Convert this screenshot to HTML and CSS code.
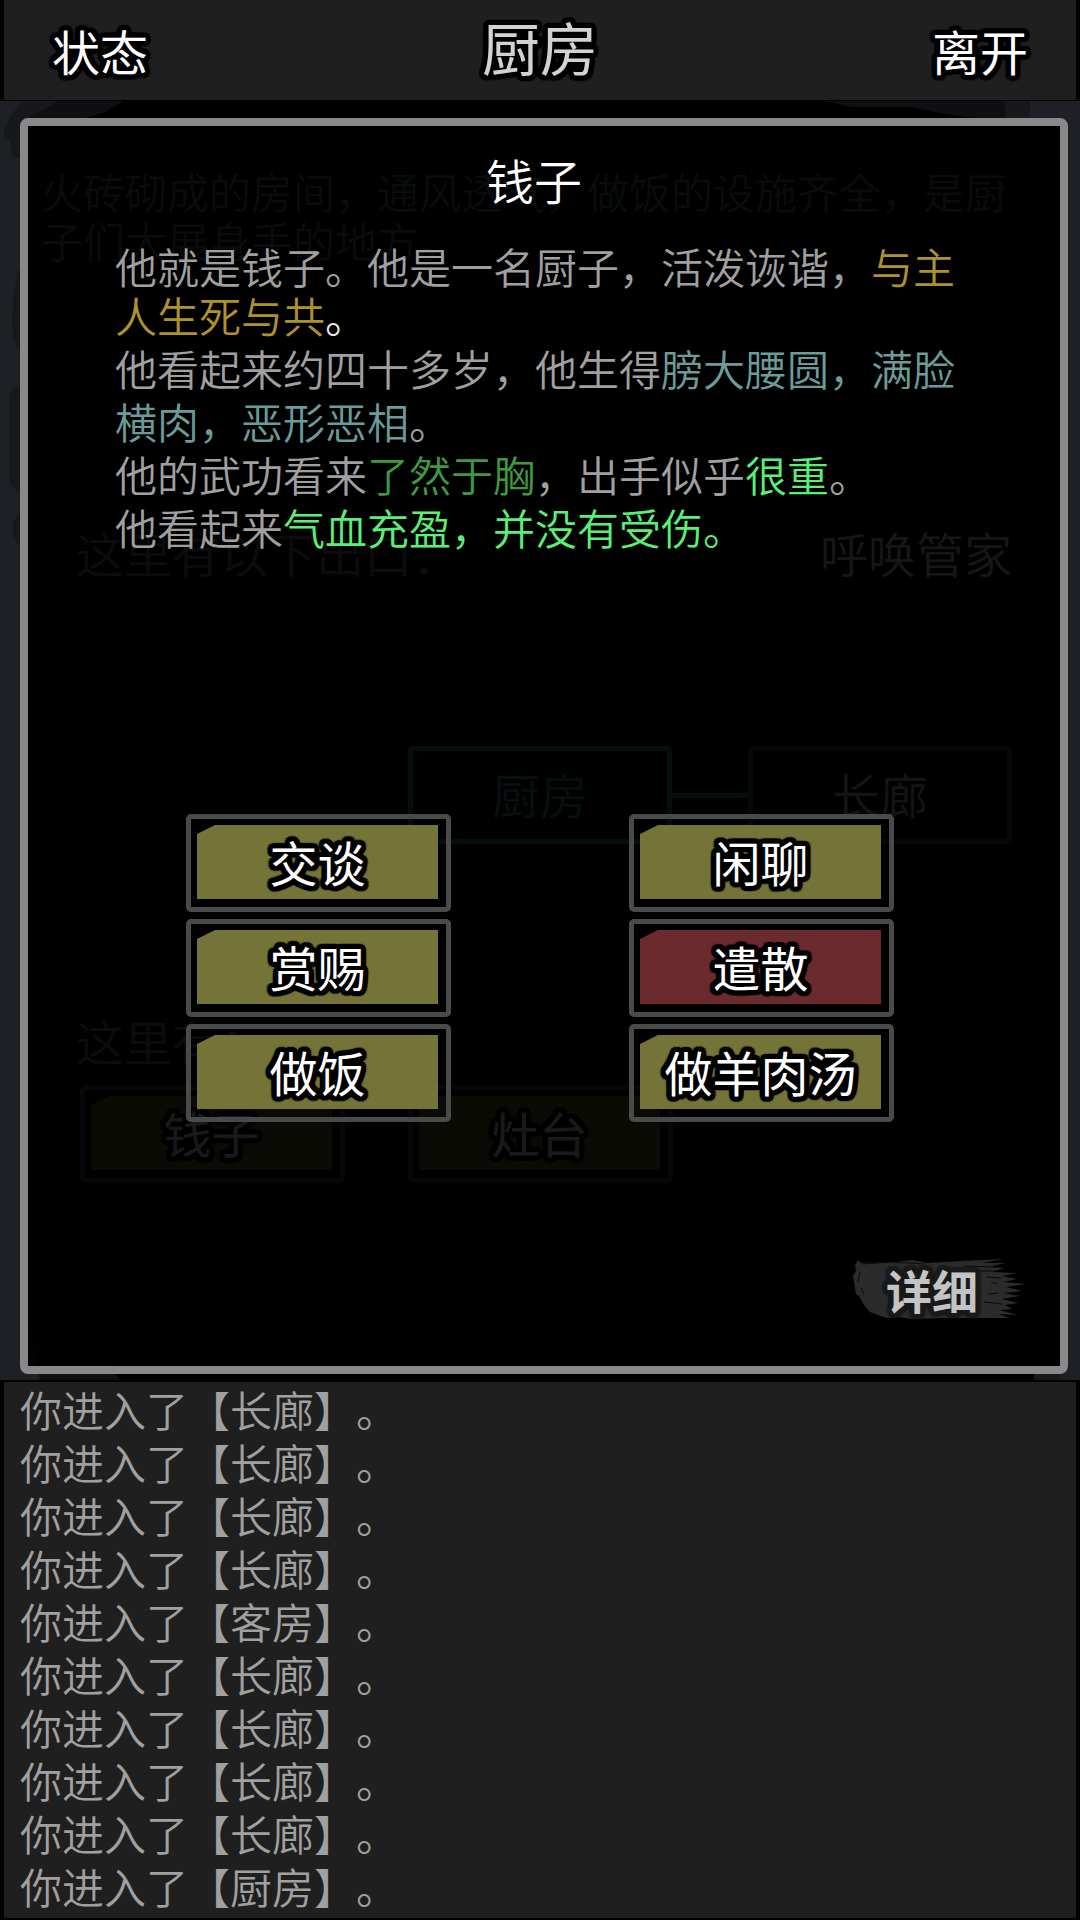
FILE: index.html
```html
<!DOCTYPE html>
<html lang="zh-CN">
<head>
<meta charset="utf-8">
<meta name="viewport" content="width=device-width, initial-scale=1">
<title>厨房</title>
<link rel="stylesheet" href="styles.css">
</head>
<body>
<header class="topbar">
  <button class="topbar-button outlined" type="button">状态</button>
  <h1 class="topbar-title outlined">厨房</h1>
  <button class="topbar-button outlined" type="button">离开</button>
</header>

<main class="scene">
  <svg class="ink" viewBox="0 0 1080 1282" preserveAspectRatio="none" aria-hidden="true">
    <path fill="#17181b" d="M24 0H1030V20L1060 80V1282H60V446L18 444Q12 436 12 426Q14 418 20 412V392L12 386Q9 382 9 370V300Q9 288 20 284V252Q12 240 12 220Q13 190 18 170L24 166V58L12 56L10 40L4 36Q4 18 24 0Z"/>
    <path fill="#0e0e13" d="M58 0H1005V20H1060V1270L970 1282H40L24 1200V20Z"/>
    <path fill="#000000" d="M124 0H825L850 6H910L940 12L980 18V60H1060V1275H1034V1282H120L60 1200V60L86 17L105 11Z"/>
  </svg>

  <section class="room">
    <p class="room-description">火砖砌成的房间，通风透气，做饭的设施齐全，是厨子们大展身手的地方。</p>
    <div class="room-heading">
      <h2 class="room-label">这里有以下出口：</h2>
      <button class="summon" type="button">呼唤管家</button>
    </div>
    <div class="exits">
      <button class="exit exit-current" type="button">厨房</button>
      <span class="exit-link"></span>
      <button class="exit" type="button">长廊</button>
    </div>
    <h2 class="room-label">这里有：</h2>
    <div class="things">
      <button class="plate" type="button"><span class="plate-face outlined">钱子</span></button>
      <button class="plate" type="button"><span class="plate-face outlined">灶台</span></button>
    </div>
  </section>

  <section class="dialog" role="dialog" aria-labelledby="npc-name">
    <div class="profile">
      <h2 class="profile-name" id="npc-name">钱子</h2>
      <p class="profile-intro">他就是钱子。他是一名厨子，活泼诙谐，<span class="gold">与主人生死与共</span><span class="white">。</span></p>
      <p>他看起来约四十多岁，他生得<span class="teal">膀大腰圆，满脸横肉，恶形恶相</span>。</p>
      <p>他的武功看来<span class="green">了然于胸</span>，出手似乎<span class="lime">很重</span>。</p>
      <p>他看起来<span class="lime">气血充盈，并没有受伤。</span></p>
    </div>
    <div class="actions">
      <button class="plate" type="button"><span class="plate-face outlined">交谈</span></button>
      <button class="plate" type="button"><span class="plate-face outlined">闲聊</span></button>
      <button class="plate" type="button"><span class="plate-face outlined">赏赐</span></button>
      <button class="plate plate-danger" type="button"><span class="plate-face outlined">遣散</span></button>
      <button class="plate" type="button"><span class="plate-face outlined">做饭</span></button>
      <button class="plate" type="button"><span class="plate-face outlined">做羊肉汤</span></button>
    </div>
    <button class="detail" type="button">
      <svg class="detail-brush" viewBox="0 0 174 62" aria-hidden="true">
        <path fill="#2b2b2b" d="M6 2L9 5L44 4L60 2L75 5L110 3L151 1L130 5L154 5L136 9L152 10L140 14L166 15L150 18L165 21L152 24L174 26L154 29L170 33L152 35L168 38L150 41L166 45L153 47L160 51L148 52L166 57L146 56L158 60L90 60L60 61L46 59L34 60L26 57L18 54L12 47L7 38L4 36L2 24L1 18L4 13L3 7Z"/>
        <path fill="none" stroke="#0a0a0a" stroke-width="1" d="M10 6L40 4L72 6M112 8L138 9M124 13H146M134 19L150 20M139 25H146M132 44L150 46M136 36L146 35M8 14L6 24M9 30L12 36"/>
      </svg>
      <span class="detail-label outlined">详细</span>
    </button>
  </section>
</main>

<ol class="log">
  <li>你进入了【长廊】。</li>
  <li>你进入了【长廊】。</li>
  <li>你进入了【长廊】。</li>
  <li>你进入了【长廊】。</li>
  <li>你进入了【客房】。</li>
  <li>你进入了【长廊】。</li>
  <li>你进入了【长廊】。</li>
  <li>你进入了【长廊】。</li>
  <li>你进入了【长廊】。</li>
  <li>你进入了【厨房】。</li>
</ol>
</body>
</html>
```
FILE: styles.css
```css
* {
  box-sizing: border-box;
}

body {
  display: flex;
  flex-direction: column;
  min-height: 100vh;
  margin: 0;
  background: #000;
  color: #a0a0a0;
  font-family: "Noto Sans CJK SC", sans-serif;
  font-size: 42px;
  font-weight: 350;
  line-height: 53px;
  text-spacing-trim: space-all;
}

h1,
h2,
p {
  margin: 0;
  font-weight: inherit;
}

button {
  margin: 0;
  padding: 0;
  border: 0;
  background: none;
  color: #fff;
  font: inherit;
  font-size: 48px;
  cursor: pointer;
}

/* Round outline built from a ring of shadows */
.outlined {
  --outline: #000;
  font-weight: 400;
  text-shadow:
    5px 0 1px var(--outline), -5px 0 1px var(--outline),
    0 5px 1px var(--outline), 0 -5px 1px var(--outline),
    5px 2px 1px var(--outline), 5px -2px 1px var(--outline),
    -5px 2px 1px var(--outline), -5px -2px 1px var(--outline),
    2px 5px 1px var(--outline), 2px -5px 1px var(--outline),
    -2px 5px 1px var(--outline), -2px -5px 1px var(--outline),
    4px 4px 1px var(--outline), 4px -4px 1px var(--outline),
    -4px 4px 1px var(--outline), -4px -4px 1px var(--outline),
    2px 2px 1px var(--outline), 2px -2px 1px var(--outline),
    -2px 2px 1px var(--outline), -2px -2px 1px var(--outline);
}

/* Top bar */
.topbar {
  display: flex;
  align-items: center;
  justify-content: space-between;
  height: 101px;
  padding: 0 48px;
  border: solid #000;
  border-width: 0 4px 1px;
  background: #1f1f1f;
}

.topbar-title {
  padding-bottom: 8px;
  color: #d2d2d2;
  font-size: 58px;
}

/* Scene: ink backdrop, room and dialog share one cell */
.scene {
  display: grid;
  flex: 1;
  background: #1f2026;
}

.ink,
.room,
.dialog {
  grid-area: 1 / 1;
}

.ink {
  width: 100%;
  height: 0;
  min-height: 100%;
}

.room {
  padding: 65px 68px 0 76px;
}

.room-description {
  margin: 0 0 262px -35px;
  color: #5a7878;
  line-height: 49px;
}

.room-heading {
  display: flex;
  justify-content: space-between;
}

.room-label {
  color: #7c7c7c;
  font-size: 48px;
}

.summon {
  color: #e0e0e0;
}

.exits {
  display: flex;
  align-items: center;
  justify-content: flex-end;
  margin: 167px 0 170px;
}

.exit {
  width: 264px;
  height: 98px;
  padding-bottom: 4px;
  border: 5px solid #484848;
  border-radius: 5px;
  color: #c8c8c8;
}

.exit-current {
  border-color: #2c8c8c;
  color: #3fa0a0;
}

.exit-link {
  width: 76px;
  height: 5px;
  background: #2c8c8c;
}

.things {
  display: flex;
  gap: 63px;
  margin: 18px 4px;
}

/* Framed button with a cut-corner face */
.plate {
  display: flex;
  width: 265px;
  height: 98px;
  padding: 6px 8px 8px 6px;
  border: 5px solid #4a4a4a;
  border-radius: 5px;
}

.plate-face {
  flex: 1;
  background: #747338;
  clip-path: polygon(18px 0, 100% 0, 100% 100%, 0 100%, 0 9px);
  line-height: 72px;
}

.plate-danger .plate-face {
  background: #6b2b2e;
}

/* Dialog */
.dialog {
  position: relative;
  z-index: 1;
  display: flex;
  flex-direction: column;
  margin: 17px 12px 6px 20px;
  border: 8px solid #898989;
  border-radius: 8px;
  background: rgba(0, 0, 0, 0.9);
}

.profile {
  padding: 27px 95px 0 87px;
}

.profile-name {
  margin-bottom: 35px;
  padding-right: 12px;
  color: #fff;
  font-size: 48px;
  text-align: center;
}

.profile-intro {
  margin-bottom: 2px;
  line-height: 49px;
}

.gold {
  color: #b0922a;
}

.white {
  color: #e8e8e8;
}

.teal {
  color: #6b9c9c;
}

.green {
  color: #3f9a3f;
}

.lime {
  color: #5af078;
}

.actions {
  display: grid;
  grid-template-columns: repeat(2, 265px);
  justify-content: space-between;
  row-gap: 7px;
  margin-top: 261px;
  padding: 0 166px 0 158px;
}

.detail {
  display: grid;
  align-self: flex-end;
  width: 174px;
  margin: auto 34px 46px 0;
}

.detail-brush,
.detail-label {
  grid-area: 1 / 1;
}

.detail-label {
  --outline: #1a1a1a;
  padding-right: 14px;
  color: #c4c4c4;
  font-size: 46px;
  font-weight: 700;
  line-height: 62px;
}

/* Message log */
.log {
  margin: 0;
  padding: 0 16px 6px;
  border: solid #000;
  border-width: 2px 4px;
  background: #1f1f1f;
  list-style: none;
}
```
